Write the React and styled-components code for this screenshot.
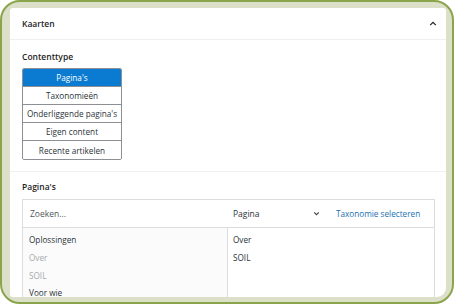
import React from "react";
import styled, { createGlobalStyle, css } from "styled-components";

const GlobalStyle = createGlobalStyle`
  html, body {
    margin: 0;
    padding: 0;
    background: #fff;
  }
  body {
    font-family: "Open Sans", "Noto Sans", sans-serif;
    color: #1e1e1e;
  }
  * {
    box-sizing: border-box;
  }
`;

//#region styled components
const Frame = styled.div`
  width: 454px;
  height: 304px;
  border: 2px solid #8aa44c;
  border-radius: 20px;
  background: #dde0c8;
  padding: 6px 6px 5px 8px;
  display: flex;
`;
const Panel = styled.div`
  flex: 1;
  display: flex;
  flex-direction: column;
  background: #fff;
  overflow: hidden;
  border-radius: 3px 3px 9px 3px;
`;
const Header = styled.div`
  height: 32px;
  flex-shrink: 0;
  display: flex;
  align-items: center;
  justify-content: space-between;
  padding: 0 9px 0 12px;
  border-bottom: 1px solid #f0f0f0;
  font-size: 8.5px;
  font-weight: 600;
`;
const Section = styled.section`
  padding: ${({ pad }) => pad};
  border-bottom: ${({ last }) => (last ? "none" : "1px solid #f0f0f0")};
  ${({ last }) =>
    last &&
    css`
      flex: 1;
      min-height: 0;
      display: flex;
      flex-direction: column;
    `}
`;
const Label = styled.div`
  font-size: 8.5px;
  font-weight: 600;
  line-height: 12px;
  margin-bottom: ${({ gap }) => gap}px;
`;
const ButtonGroup = styled.div`
  width: 100px;
  border: 1px solid #8c8f94;
  border-radius: 2px;
  display: flex;
  flex-direction: column;
  overflow: hidden;
`;
const Choice = styled.div`
  height: 18px;
  display: flex;
  align-items: center;
  justify-content: center;
  font-size: 8.2px;
  color: ${({ active }) => (active ? "#fff" : "#2c3338")};
  background: ${({ active }) => (active ? "#0b7bd2" : "#fff")};
  border-bottom: 1px solid #8c8f94;
  &:last-child {
    border-bottom: none;
  }
`;
const Box = styled.div`
  flex: 1;
  min-height: 0;
  border: 1px solid #dcdcde;
  border-bottom: none;
  display: grid;
  grid-template-columns: 205px 1fr;
  grid-template-rows: 28px 1fr;
`;
const Search = styled.div`
  display: flex;
  align-items: center;
  padding-left: 7px;
  font-size: 8.5px;
  color: #50575e;
  border-bottom: 1px solid #dcdcde;
`;
const Controls = styled.div`
  display: flex;
  align-items: center;
  gap: 16px;
  padding-left: 5px;
  border-bottom: 1px solid #dcdcde;
`;
const Select = styled.div`
  width: 87px;
  display: flex;
  align-items: center;
  justify-content: space-between;
  font-size: 8.5px;
  color: #2c3338;
`;
const Link = styled.a`
  font-size: 8.2px;
  color: #2271b1;
  text-decoration: none;
`;
const List = styled.div`
  padding: 3px 0 0 ${({ indent }) => indent}px;
  background: ${({ shade }) => (shade ? "#fbfbfb" : "#fff")};
  border-right: ${({ shade }) => (shade ? "1px solid #dcdcde" : "none")};
`;
const Item = styled.div`
  height: 17.7px;
  display: flex;
  align-items: center;
  font-size: 8.2px;
  color: ${({ muted }) => (muted ? "#a7aaad" : "#2c3338")};
`;
//#endregion

const Chevron = ({ up }) =>
  up ? (
    <svg width="8" height="5" viewBox="0 0 8 5">
      <path d="M1.2 4.2 L4 1.4 L6.8 4.2" fill="none" stroke="#1e1e1e" strokeWidth="1.2" />
    </svg>
  ) : (
    <svg width="7" height="5" viewBox="0 0 7 5">
      <path d="M1.2 1.3 L3.5 3.6 L5.8 1.3" fill="none" stroke="#3c434a" strokeWidth="1.1" />
    </svg>
  );

const choices = [
  "Pagina's",
  "Taxonomieën",
  "Onderliggende pagina's",
  "Eigen content",
  "Recente artikelen",
];

const available = [
  { name: "Oplossingen" },
  { name: "Over", muted: true },
  { name: "SOIL", muted: true },
  { name: "Voor wie" },
];

const selected = ["Over", "SOIL"];

const App = () => (
  <>
    <GlobalStyle />
    <Frame>
      <Panel>
        <Header>
          <span>Kaarten</span>
          <Chevron up />
        </Header>
        <Section pad="11px 12px 11px">
          <Label gap={5}>Contenttype</Label>
          <ButtonGroup>
            {choices.map((c, i) => (
              <Choice key={c} active={i === 0}>
                {c}
              </Choice>
            ))}
          </ButtonGroup>
        </Section>
        <Section last pad="9px 11px 0 12px">
          <Label gap={6}>Pagina's</Label>
          <Box>
            <Search>Zoeken...</Search>
            <Controls>
              <Select>
                <span>Pagina</span>
                <Chevron />
              </Select>
              <Link href="#">Taxonomie selecteren</Link>
            </Controls>
            <List shade indent={6}>
              {available.map((p) => (
                <Item key={p.name} muted={p.muted}>
                  {p.name}
                </Item>
              ))}
            </List>
            <List indent={5}>
              {selected.map((p) => (
                <Item key={p}>{p}</Item>
              ))}
            </List>
          </Box>
        </Section>
      </Panel>
    </Frame>
  </>
);

export default App;
